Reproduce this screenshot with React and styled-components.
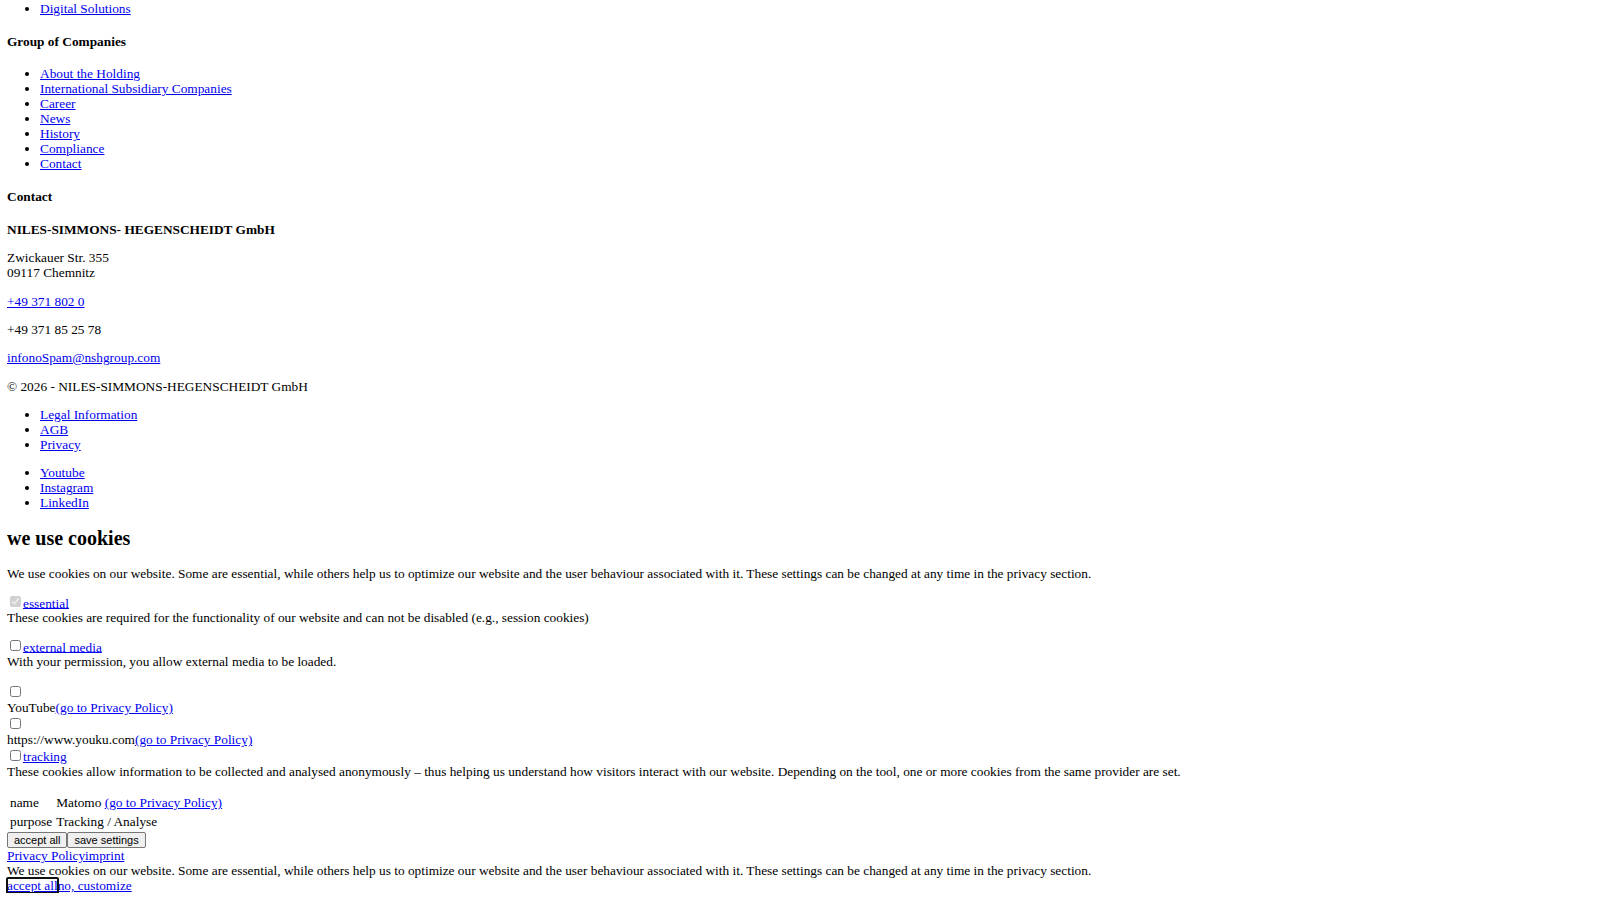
import React from "react"
import styled, { createGlobalStyle } from "styled-components"

const GlobalStyle = createGlobalStyle`
  html, body {
    margin: 0;
    background: #fff;
  }

  body {
    padding: 1px 7px 0;
    color: #000;
    font-family: "Liberation Serif", "Times New Roman", serif;
    font-size: 13.33px;
    line-height: 15px;
  }
`

const companyLinks = [
  "About the Holding",
  "International Subsidiary Companies",
  "Career",
  "News",
  "History",
  "Compliance",
  "Contact",
]

const legalLinks = ["Legal Information", "AGB", "Privacy"]
const socialLinks = ["Youtube", "Instagram", "LinkedIn"]

const LinkList = styled.ul`
  margin: ${props => (props.$flush ? "0 0 1em" : "1em 0")};
  padding-left: 33px;
  list-style: disc;
`

const Link = styled.a`
  color: #0000ee;
  text-decoration: underline;
  cursor: pointer;
  outline: ${props => (props.$focused ? "2px solid #101010" : "none")};
  outline-offset: -1px;
  border-radius: 1px;
`

const SectionTitle = styled.h4`
  font-size: 1em;
  font-weight: bold;
  margin: 1.33em 0;
`

const Para = styled.p`
  margin: 1em 0;
`

const CookieTitle = styled.h2`
  font-size: 20px;
  line-height: 23px;
  font-weight: bold;
  margin: 0.83em 0;
`

const ConsentGroup = styled.div`
  margin-bottom: ${props => (props.$last ? "0" : "1em")};
`

const OptionRow = styled.label`
  display: block;
  padding-top: ${props => (props.$solo ? "2px" : "0")};
  margin-top: ${props => (props.$nested ? "1px" : "0")};
`

const Check = styled.input.attrs({ type: "checkbox" })`
  width: 11px;
  height: 11px;
  margin: 1.5px 2px 1.5px 3px;
`

const Description = styled.div`
  margin: 0;
`

const ServiceLine = styled.div``

const VendorTable = styled.table`
  border-spacing: 2px;
  margin-top: 1em;

  td {
    padding: 1px;
    text-align: left;
    vertical-align: middle;
  }
`

const ButtonRow = styled.div`
  display: flex;
`

const ConsentButton = styled.button`
  font-family: "Liberation Sans", Arial, sans-serif;
  font-size: 11px;
  line-height: normal;
  padding: 1px 6px;
  margin: 0;
  color: #000;
  background: #efefef;
  border: 1px solid #767676;
  border-radius: 2px;
`

const BannerLine = styled.div``

const App = () => (
  <>
    <GlobalStyle />

    <LinkList $flush>
      <li>
        <Link>Digital Solutions</Link>
      </li>
    </LinkList>

    <SectionTitle>Group of Companies</SectionTitle>
    <LinkList>
      {companyLinks.map(label => (
        <li key={label}>
          <Link>{label}</Link>
        </li>
      ))}
    </LinkList>

    <SectionTitle>Contact</SectionTitle>
    <Para>
      <strong>NILES-SIMMONS- HEGENSCHEIDT GmbH</strong>
    </Para>
    <Para>
      Zwickauer Str. 355
      <br />
      09117 Chemnitz
    </Para>
    <Para>
      <Link>+49 371 802 0</Link>
    </Para>
    <Para>+49 371 85 25 78</Para>
    <Para>
      <Link>infonoSpam@nshgroup.com</Link>
    </Para>
    <Para>© 2026 - NILES-SIMMONS-HEGENSCHEIDT GmbH</Para>

    <LinkList>
      {legalLinks.map(label => (
        <li key={label}>
          <Link>{label}</Link>
        </li>
      ))}
    </LinkList>
    <LinkList>
      {socialLinks.map(label => (
        <li key={label}>
          <Link>{label}</Link>
        </li>
      ))}
    </LinkList>

    <CookieTitle>we use cookies</CookieTitle>
    <Para>
      We use cookies on our website. Some are essential, while others help us to optimize our
      website and the user behaviour associated with it. These settings can be changed at any
      time in the privacy section.
    </Para>

    <ConsentGroup>
      <OptionRow>
        <Check checked disabled readOnly />
        <Link>essential</Link>
      </OptionRow>
      <Description>
        These cookies are required for the functionality of our website and can not be disabled
        (e.g., session cookies)
      </Description>
    </ConsentGroup>

    <ConsentGroup>
      <OptionRow>
        <Check />
        <Link>external media</Link>
      </OptionRow>
      <Description>With your permission, you allow external media to be loaded.</Description>
    </ConsentGroup>

    <ConsentGroup $last>
      <OptionRow $solo>
        <Check />
      </OptionRow>
      <ServiceLine>
        YouTube<Link>(go to Privacy Policy)</Link>
      </ServiceLine>
      <OptionRow $solo>
        <Check />
      </OptionRow>
      <ServiceLine>
        https://www.youku.com<Link>(go to Privacy Policy)</Link>
      </ServiceLine>
      <OptionRow $nested>
        <Check />
        <Link>tracking</Link>
      </OptionRow>
      <Description>
        These cookies allow information to be collected and analysed anonymously – thus helping
        us understand how visitors interact with our website. Depending on the tool, one or more
        cookies from the same provider are set.
      </Description>
    </ConsentGroup>

    <VendorTable>
      <tbody>
        <tr>
          <td>name</td>
          <td>
            Matomo <Link>(go to Privacy Policy)</Link>
          </td>
        </tr>
        <tr>
          <td>purpose</td>
          <td>Tracking / Analyse</td>
        </tr>
      </tbody>
    </VendorTable>

    <ButtonRow>
      <ConsentButton>accept all</ConsentButton>
      <ConsentButton>save settings</ConsentButton>
    </ButtonRow>

    <BannerLine>
      <Link>Privacy Policy</Link>
      <Link>imprint</Link>
    </BannerLine>
    <BannerLine>
      We use cookies on our website. Some are essential, while others help us to optimize our
      website and the user behaviour associated with it. These settings can be changed at any
      time in the privacy section.
    </BannerLine>
    <BannerLine>
      <Link $focused>accept all</Link>
      <Link>no, customize</Link>
    </BannerLine>
  </>
)

export default App
